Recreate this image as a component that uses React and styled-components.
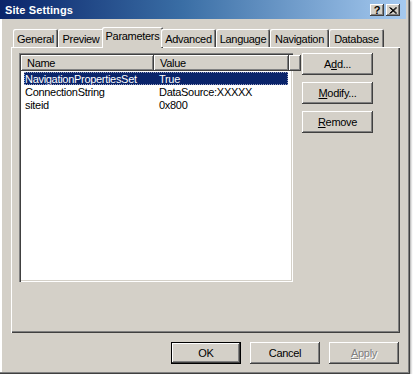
import React from "react";
import styled, { createGlobalStyle, css } from "styled-components";

const GlobalStyle = createGlobalStyle`
  html, body { margin: 0; padding: 0; background: #ffffff; }
  body {
    font-family: "Liberation Sans", Arial, sans-serif;
    font-size: 11px;
    letter-spacing: -0.3px;
    color: #000;
  }
  * { box-sizing: border-box; }
`;

const raised = css`
  box-shadow: inset -1px -1px #404040, inset 1px 1px #ffffff,
    inset -2px -2px #808080, inset 2px 2px #d4d0c8;
`;

const Window = styled.div`
  width: 410px;
  height: 374px;
  background: #d4d0c8;
  display: flex;
  flex-direction: column;
  padding: 0 4px 4px 0;
  box-shadow: inset -1px -1px #404040, inset -2px -2px #808080,
    inset 2px 0 #ffffff, 1px 1px 2px rgba(0, 0, 0, 0.35);
`;

const TitleBar = styled.div`
  height: 19px;
  display: flex;
  align-items: center;
  justify-content: space-between;
  padding: 0 6px 0 5px;
  background: linear-gradient(to right, #0a246a 0%, #3a6ea5 45%, #a6caf0 100%);
`;

const Title = styled.span`
  color: #ffffff;
  font-weight: bold;
  font-size: 11px;
  letter-spacing: 0.1px;
`;

const Caption = styled.div`
  display: flex;
  gap: 2px;
  margin-top: 1px;
`;

const CaptionButton = styled.div`
  width: 14px;
  height: 12px;
  background: #d4d0c8;
  display: flex;
  align-items: center;
  justify-content: center;
  font-weight: bold;
  font-size: 11px;
  letter-spacing: 0;
  line-height: 1;
  ${raised}
`;

const Content = styled.div`
  flex: 1;
  display: flex;
  flex-direction: column;
  padding: 8px 6px 0 11px;
`;

const TabRow = styled.div`
  display: flex;
  align-items: flex-end;
  height: 20px;
  padding-left: 2px;
  position: relative;
  z-index: 1;
`;

const Tab = styled.div`
  width: ${(p) => p.$w}px;
  height: ${(p) => (p.$active ? 21 : 18)}px;
  margin: ${(p) => (p.$active ? "0 -2px -1px -2px" : "0")};
  display: flex;
  align-items: center;
  justify-content: center;
  padding-bottom: ${(p) => (p.$active ? 3 : 0)}px;
  padding-top: ${(p) => (p.$active ? 0 : 1)}px;
  background: #d4d0c8;
  border-top-left-radius: 2px;
  border-top-right-radius: 2px;
  box-shadow: inset 1px 1px #ffffff, inset -1px 0 #404040, inset -2px 0 #808080;
  white-space: nowrap;
`;

const Panel = styled.div`
  height: 286px;
  display: flex;
  align-items: flex-start;
  gap: 9px;
  padding: 6px 8px;
  box-shadow: inset 1px 1px #ffffff, inset -1px -1px #404040,
    inset -2px -2px #808080;
`;

const ListView = styled.div`
  width: 274px;
  height: 229px;
  background: #ffffff;
  padding: 2px;
  box-shadow: inset 1px 1px #808080, inset 2px 2px #404040,
    inset -1px -1px #ffffff, inset -2px -2px #d4d0c8;
  display: flex;
  flex-direction: column;
`;

const Header = styled.div`
  display: flex;
  height: 16px;
  flex: none;
`;

const HeaderCell = styled.div`
  width: ${(p) => (p.$w ? `${p.$w}px` : "auto")};
  flex: ${(p) => (p.$w ? "none" : "1")};
  height: 16px;
  background: #d4d0c8;
  padding: 0 6px;
  display: flex;
  align-items: center;
  ${raised}
`;

const Row = styled.div`
  display: flex;
  height: 13px;
  align-items: center;
  margin-left: 3px;
  width: 264px;
  ${(p) =>
    p.$selected &&
    css`
      background: #0a246a;
      color: #ffffff;
      outline: 1px dotted #9aa0c0;
      outline-offset: -1px;
    `}
`;

const Cell = styled.div`
  width: ${(p) => p.$w}px;
  padding-left: ${(p) => p.$pad}px;
  white-space: nowrap;
  overflow: hidden;
`;

const ButtonColumn = styled.div`
  display: flex;
  flex-direction: column;
  gap: 7px;
`;

const Button = styled.div`
  width: ${(p) => p.$w || 71}px;
  height: 22px;
  background: #d4d0c8;
  display: flex;
  align-items: center;
  justify-content: center;
  ${raised}
  ${(p) =>
    p.$default &&
    css`
      box-shadow: inset 0 0 0 1px #000000, inset -2px -2px #404040,
        inset 2px 2px #ffffff, inset -3px -3px #808080;
    `}
  ${(p) =>
    p.$disabled &&
    css`
      color: #808080;
      text-shadow: 1px 1px #ffffff;
    `}
`;

const Footer = styled.div`
  display: flex;
  justify-content: flex-end;
  gap: 9px;
  padding: 9px 1px 0 0;
`;

const U = styled.span`
  text-decoration: underline;
`;

const tabs = [
  ["General", 45],
  ["Preview", 46],
  ["Parameters", 61, true],
  ["Advanced", 55],
  ["Language", 54],
  ["Navigation", 59],
  ["Database", 55],
];

const rows = [
  ["NavigationPropertiesSet", "True", true],
  ["ConnectionString", "DataSource:XXXXX"],
  ["siteid", "0x800"],
];

export default function App() {
  return (
    <>
      <GlobalStyle />
      <Window>
        <TitleBar>
          <Title>Site Settings</Title>
          <Caption>
            <CaptionButton>?</CaptionButton>
            <CaptionButton>
              <svg width="8" height="7" viewBox="0 0 8 7">
                <path d="M0.5 0.5 L7 6.5 M1.5 0.5 L8 6.5 M7 0.5 L0.5 6.5 M8 0.5 L1.5 6.5" stroke="#000" strokeWidth="1" fill="none" />
              </svg>
            </CaptionButton>
          </Caption>
        </TitleBar>
        <Content>
          <TabRow>
            {tabs.map(([label, w, active]) => (
              <Tab key={label} $w={w} $active={active}>
                {label}
              </Tab>
            ))}
          </TabRow>
          <Panel>
            <ListView>
              <Header>
                <HeaderCell $w={133}>Name</HeaderCell>
                <HeaderCell $w={135}>Value</HeaderCell>
                <HeaderCell />
              </Header>
              {rows.map(([n, v, sel], i) => (
                <Row key={n} $selected={sel} style={{ marginTop: i === 0 ? 1 : 0 }}>
                  <Cell $w={130} $pad={1}>{n}</Cell>
                  <Cell $w={134} $pad={5}>{v}</Cell>
                </Row>
              ))}
            </ListView>
            <ButtonColumn>
              <Button>A<U>d</U>d...</Button>
              <Button><U>M</U>odify...</Button>
              <Button><U>R</U>emove</Button>
            </ButtonColumn>
          </Panel>
          <Footer>
            <Button $w={70} $default>OK</Button>
            <Button $w={70}>Cancel</Button>
            <Button $w={70} $disabled><U>A</U>pply</Button>
          </Footer>
        </Content>
      </Window>
    </>
  );
}
